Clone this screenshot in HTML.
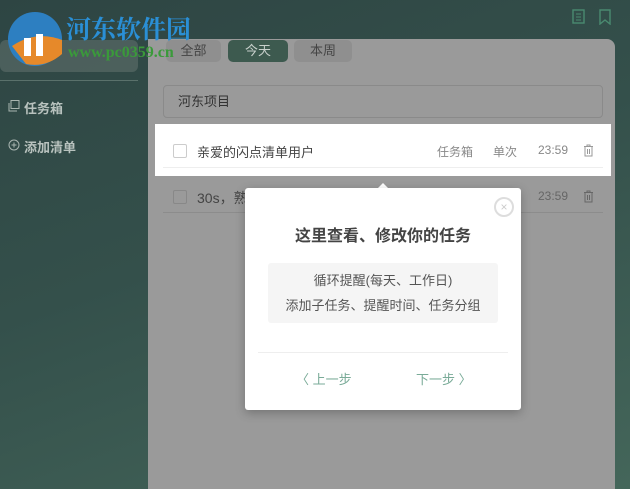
<!DOCTYPE html>
<html><head><meta charset="utf-8"><style>
*{margin:0;padding:0;box-sizing:border-box}
body{width:630px;height:489px;overflow:hidden;position:relative;font-family:"Liberation Sans","Noto Sans CJK SC",sans-serif;background:linear-gradient(160deg,#2e4543 0%,#34504b 45%,#44665a 100%)}
.abs{position:absolute}
.main{left:148px;top:39px;width:467px;height:450px;background:#9a9a9a;border-radius:0 8px 0 0}
.side{color:#b8c2be;font-size:13px;font-weight:bold}
.tab{top:40px;height:22px;border-radius:5px;font-size:13px;color:#444;text-align:center;line-height:22px}
.card{background:#fff;border-radius:3px;box-shadow:0 3px 10px rgba(0,0,0,.25)}
.g{color:#888;font-size:12px}
</style></head><body>
<div class="abs" style="left:0;top:40px;width:138px;height:32px;background:rgba(130,140,135,.35);border-radius:6px"></div>
<div class="abs" style="left:0;top:80px;width:138px;height:1px;background:#5a716b"></div>
<svg class="abs" style="left:8px;top:100px" width="12" height="12"><rect x="3" y="0.5" width="8" height="8" fill="none" stroke="#a9b5b0"/><path d="M1 3v8h8" fill="none" stroke="#a9b5b0"/></svg>
<div class="abs side" style="left:24px;top:98px">任务箱</div>
<svg class="abs" style="left:8px;top:139px" width="12" height="12"><circle cx="6" cy="6" r="5" fill="none" stroke="#a9b5b0"/><path d="M3.5 6h5M6 3.5v5" stroke="#a9b5b0"/></svg>
<div class="abs side" style="left:24px;top:137px">添加清单</div>
<svg class="abs" style="left:572px;top:9px" width="42" height="16"><rect x="1" y="1" width="11" height="13" fill="none" stroke="#4a8a70" stroke-width="1.4"/><path d="M4 5h5M4 8h5M4 11h5" stroke="#4a8a70"/><path d="M28 1h10v14l-5-4-5 4z" fill="none" stroke="#4a8a70" stroke-width="1.4"/></svg>
<div class="abs main"></div>
<div class="abs tab" style="left:166px;width:55px;background:#8f8f8f">全部</div>
<div class="abs tab" style="left:228px;width:60px;background:#3d5a4f;color:#c7cfcb">今天</div>
<div class="abs tab" style="left:294px;width:58px;background:#8f8f8f">本周</div>
<svg class="abs" style="left:6px;top:10px" width="58" height="58"><circle cx="29" cy="29" r="27" fill="#2d7fc1"/><path d="M6 36 Q30 20 56 30 L56 44 Q40 58 20 54Z" fill="#e6892a"/><rect x="18" y="28" width="7" height="18" fill="#fff"/><rect x="30" y="24" width="7" height="22" fill="#fff"/></svg>
<div class="abs" style="left:66px;top:10px;font-size:25px;font-weight:bold;color:#2a8fd6;font-family:'Liberation Serif','Noto Serif CJK SC',serif">河东软件园</div>
<div class="abs" style="left:68px;top:44px;font-size:16px;font-weight:bold;color:#3a9a3a;font-family:'Liberation Serif',serif">www.pc0359.cn</div>
<div class="abs" style="left:163px;top:85px;width:440px;height:33px;border:1px solid #8a8a8a;border-radius:4px;font-size:13px;color:#333;line-height:31px;padding-left:14px">河东项目</div>
<div class="abs" style="left:155px;top:124px;width:456px;height:52px;background:#fff"></div>
<div class="abs" style="left:163px;top:167px;width:440px;height:1px;background:#eee"></div>
<div class="abs" style="left:173px;top:144px;width:14px;height:14px;border:1px solid #ccc;border-radius:2px"></div>
<div class="abs" style="left:197px;top:142px;font-size:13px;color:#444">亲爱的闪点清单用户</div>
<div class="abs g" style="left:437px;top:143px">任务箱</div>
<div class="abs g" style="left:493px;top:143px">单次</div>
<div class="abs g" style="left:538px;top:143px">23:59</div>
<svg class="abs" style="left:583px;top:144px" width="11" height="13"><path d="M1 2.5h9M4 2.5v-1.5h3v1.5M2 2.5v9.5h7v-9.5M4.5 5v5M6.5 5v5" fill="none" stroke="#999"/></svg>
<div class="abs" style="left:173px;top:190px;width:14px;height:14px;border:1px solid #888;border-radius:2px"></div>
<div class="abs" style="left:197px;top:188px;font-size:14px;color:#444">30s，熟</div>
<div class="abs g" style="left:538px;top:189px;color:#666">23:59</div>
<svg class="abs" style="left:583px;top:190px" width="11" height="13"><path d="M1 2.5h9M4 2.5v-1.5h3v1.5M2 2.5v9.5h7v-9.5M4.5 5v5M6.5 5v5" fill="none" stroke="#666"/></svg>
<div class="abs" style="left:163px;top:212px;width:440px;height:1px;background:#8c8c8c"></div>
<div class="abs" style="left:377px;top:177px;width:0;height:0;border:6px solid transparent;border-bottom-color:#fff"></div>
<div class="abs card" style="left:245px;top:188px;width:276px;height:222px"></div>
<div class="abs" style="left:494px;top:197px;width:20px;height:20px;border:2px solid #ddd;border-radius:50%;color:#ccc;font-size:12px;text-align:center;line-height:16px">×</div>
<div class="abs" style="left:245px;top:222px;width:276px;text-align:center;font-size:16px;font-weight:bold;color:#444">这里查看、修改你的任务</div>
<div class="abs" style="left:268px;top:263px;width:230px;height:60px;background:#f5f5f5;border-radius:3px;text-align:center;font-size:13px;color:#555;line-height:25px;padding-top:5px">循环提醒(每天、工作日)<br>添加子任务、提醒时间、任务分组</div>
<div class="abs" style="left:258px;top:352px;width:250px;height:1px;background:#eee"></div>
<div class="abs" style="left:296px;top:369px;font-size:13px;color:#7aab98">〈 上一步</div>
<div class="abs" style="left:416px;top:369px;font-size:13px;color:#7aab98">下一步 〉</div>
</body></html>
